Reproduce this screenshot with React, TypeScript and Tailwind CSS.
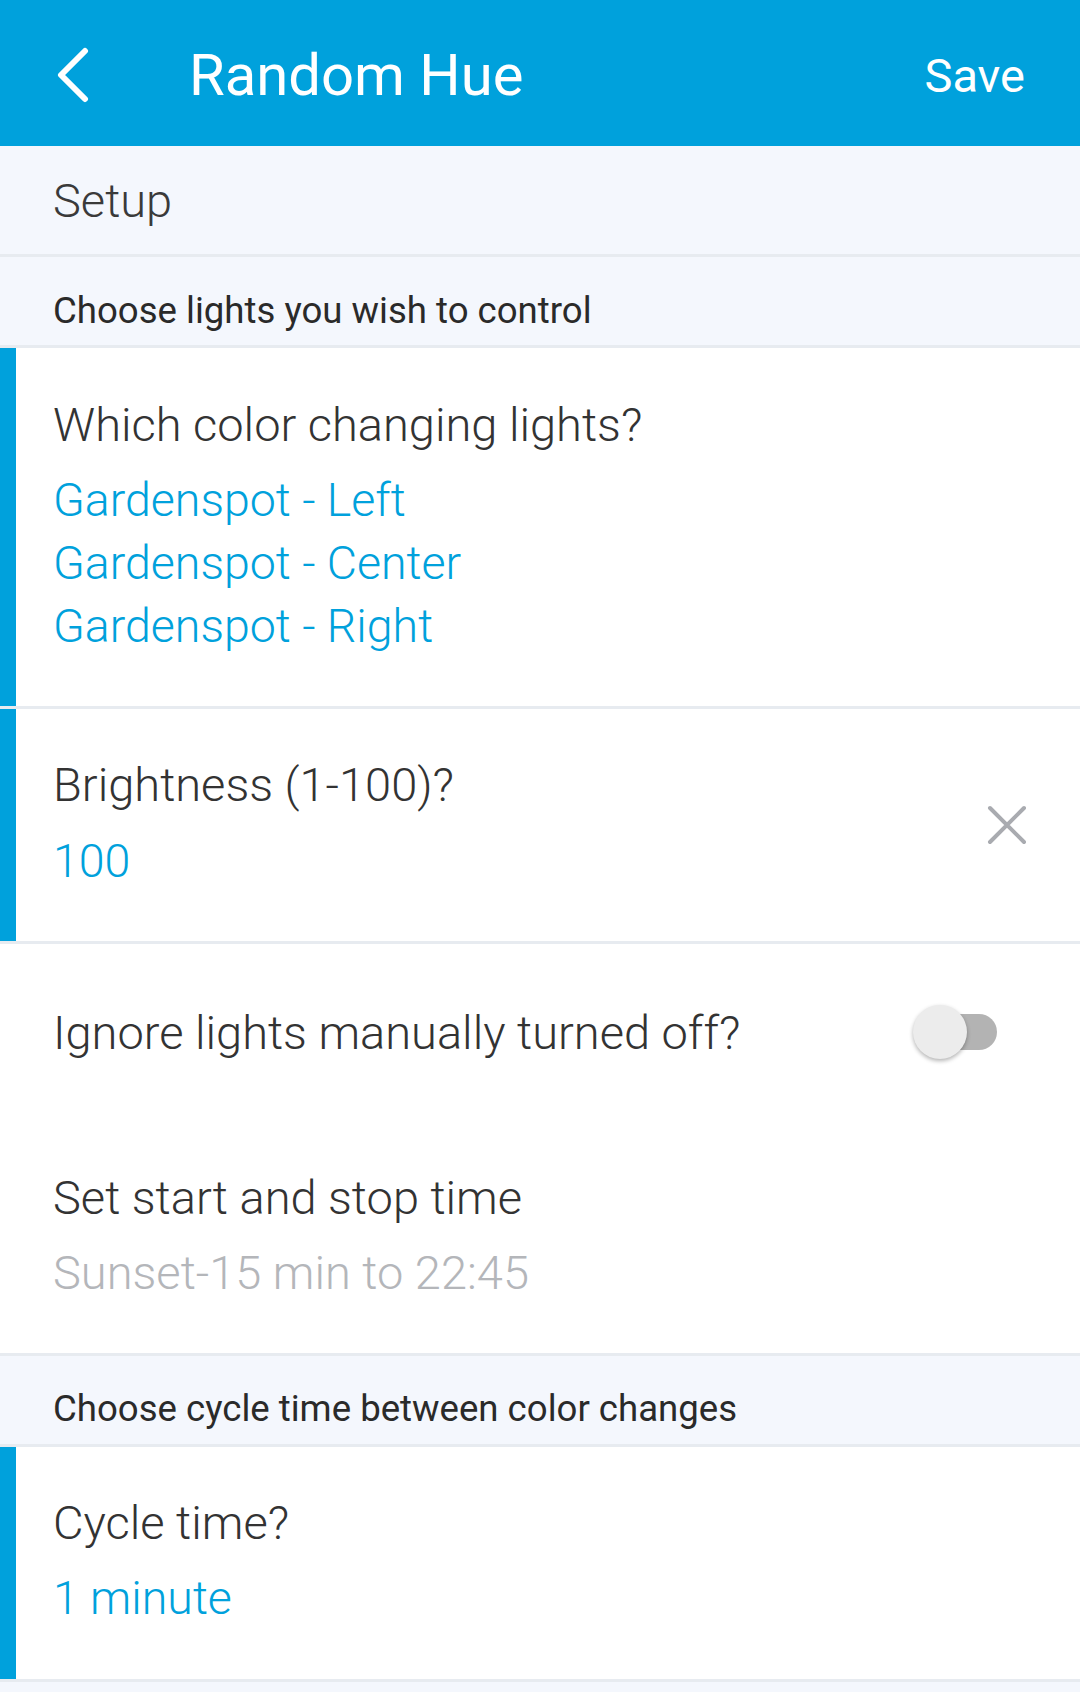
export default function App() {
  const lights = ['Gardenspot - Left', 'Gardenspot - Center', 'Gardenspot - Right'];

  return (
    <div
      className="w-[1080px] min-h-[1692px] bg-[#f4f7fd] text-[#333333]"
      style={{ fontFamily: 'Roboto, "Noto Sans", sans-serif' }}
    >
      {/* Top bar */}
      <div className="h-[146px] bg-[#00a1dc] flex items-center pt-[4px] text-white">
        <div className="w-[189px] pl-[55px] flex items-center">
          <svg width="36" height="56" viewBox="0 0 36 56" fill="none">
            <path
              d="M30 4L6 28l24 24"
              stroke="white"
              strokeWidth={6}
              strokeLinecap="round"
              strokeLinejoin="round"
            />
          </svg>
        </div>
        <h1 className="flex-1 text-[58px] leading-[70px] font-normal">Random Hue</h1>
        <button className="pr-[55px] text-[47px] leading-[55px] font-normal">Save</button>
      </div>

      {/* Setup */}
      <div className="h-[111px] flex items-center pl-[53px] border-b-[3px] border-[#e7ebf0]">
        <span className="text-[47px] leading-[55px] font-light text-[#3a3a3a]">Setup</span>
      </div>

      {/* Section header */}
      <div className="h-[91px] pl-[53px] pt-[33px] border-b-[3px] border-[#e7ebf0]">
        <span className="text-[36.6px] leading-[42px] font-normal text-[#2a2a2a]">
          Choose lights you wish to control
        </span>
      </div>

      {/* Which lights */}
      <div className="flex bg-white border-b-[3px] border-[#e7ebf0]">
        <div className="w-[16px] bg-[#00a1dc]" />
        <div className="pl-[37px] pt-[45px] pb-[48px]">
          <div className="text-[47px] leading-[63px] font-light">Which color changing lights?</div>
          <div className="mt-[13px]">
            {lights.map((l) => (
              <div key={l} className="text-[46.5px] leading-[63px] font-light text-[#00a1dc]">
                {l}
              </div>
            ))}
          </div>
        </div>
      </div>

      {/* Brightness */}
      <div className="flex bg-white border-b-[3px] border-[#e7ebf0]">
        <div className="w-[16px] bg-[#00a1dc]" />
        <div className="flex-1 flex items-center pl-[37px] pr-[51px]">
          <div className="flex-1 pt-[44px] pb-[48px]">
            <div className="text-[47px] leading-[63px] font-light">Brightness (1-100)?</div>
            <div className="mt-[14px] text-[46.5px] leading-[63px] font-light text-[#00a1dc]">100</div>
          </div>
          <svg width="44" height="44" viewBox="0 0 44 44" fill="none">
            <path d="M5 5l34 34M39 5L5 39" stroke="#a9abb0" strokeWidth={4} strokeLinecap="round" />
          </svg>
        </div>
      </div>

      {/* Ignore toggle */}
      <div className="h-[176px] bg-white flex items-center pl-[53px] pr-[83px]">
        <span className="flex-1 text-[47px] leading-[63px] font-light">
          Ignore lights manually turned off?
        </span>
        <div className="relative w-[84px] h-[54px]">
          <div className="absolute right-0 top-[9px] w-[78px] h-[36px] rounded-full bg-[#b3b3b3]" />
          <div className="absolute left-0 top-0 w-[54px] h-[54px] rounded-full bg-[#ececec] shadow-[0_2px_4px_rgba(0,0,0,0.3)]" />
        </div>
      </div>

      {/* Start/stop time */}
      <div className="bg-white pl-[53px] pt-[46px] pb-[49px] border-b-[3px] border-[#e7ebf0]">
        <div className="text-[47px] leading-[63px] font-light">Set start and stop time</div>
        <div className="mt-[12px] text-[47px] leading-[63px] font-light text-[#b4b6ba]">
          Sunset-15 min to 22:45
        </div>
      </div>

      {/* Section header */}
      <div className="h-[91px] pl-[53px] pt-[32px] border-b-[3px] border-[#e7ebf0]">
        <span className="text-[36.6px] leading-[42px] font-normal text-[#2a2a2a]">
          Choose cycle time between color changes
        </span>
      </div>

      {/* Cycle time */}
      <div className="flex bg-white border-b-[3px] border-[#e7ebf0]">
        <div className="w-[16px] bg-[#00a1dc]" />
        <div className="pl-[37px] pt-[44px] pb-[49px]">
          <div className="text-[47px] leading-[63px] font-light">Cycle time?</div>
          <div className="mt-[13px] text-[46.5px] leading-[63px] font-light text-[#00a1dc]">1 minute</div>
        </div>
      </div>
    </div>
  );
}
